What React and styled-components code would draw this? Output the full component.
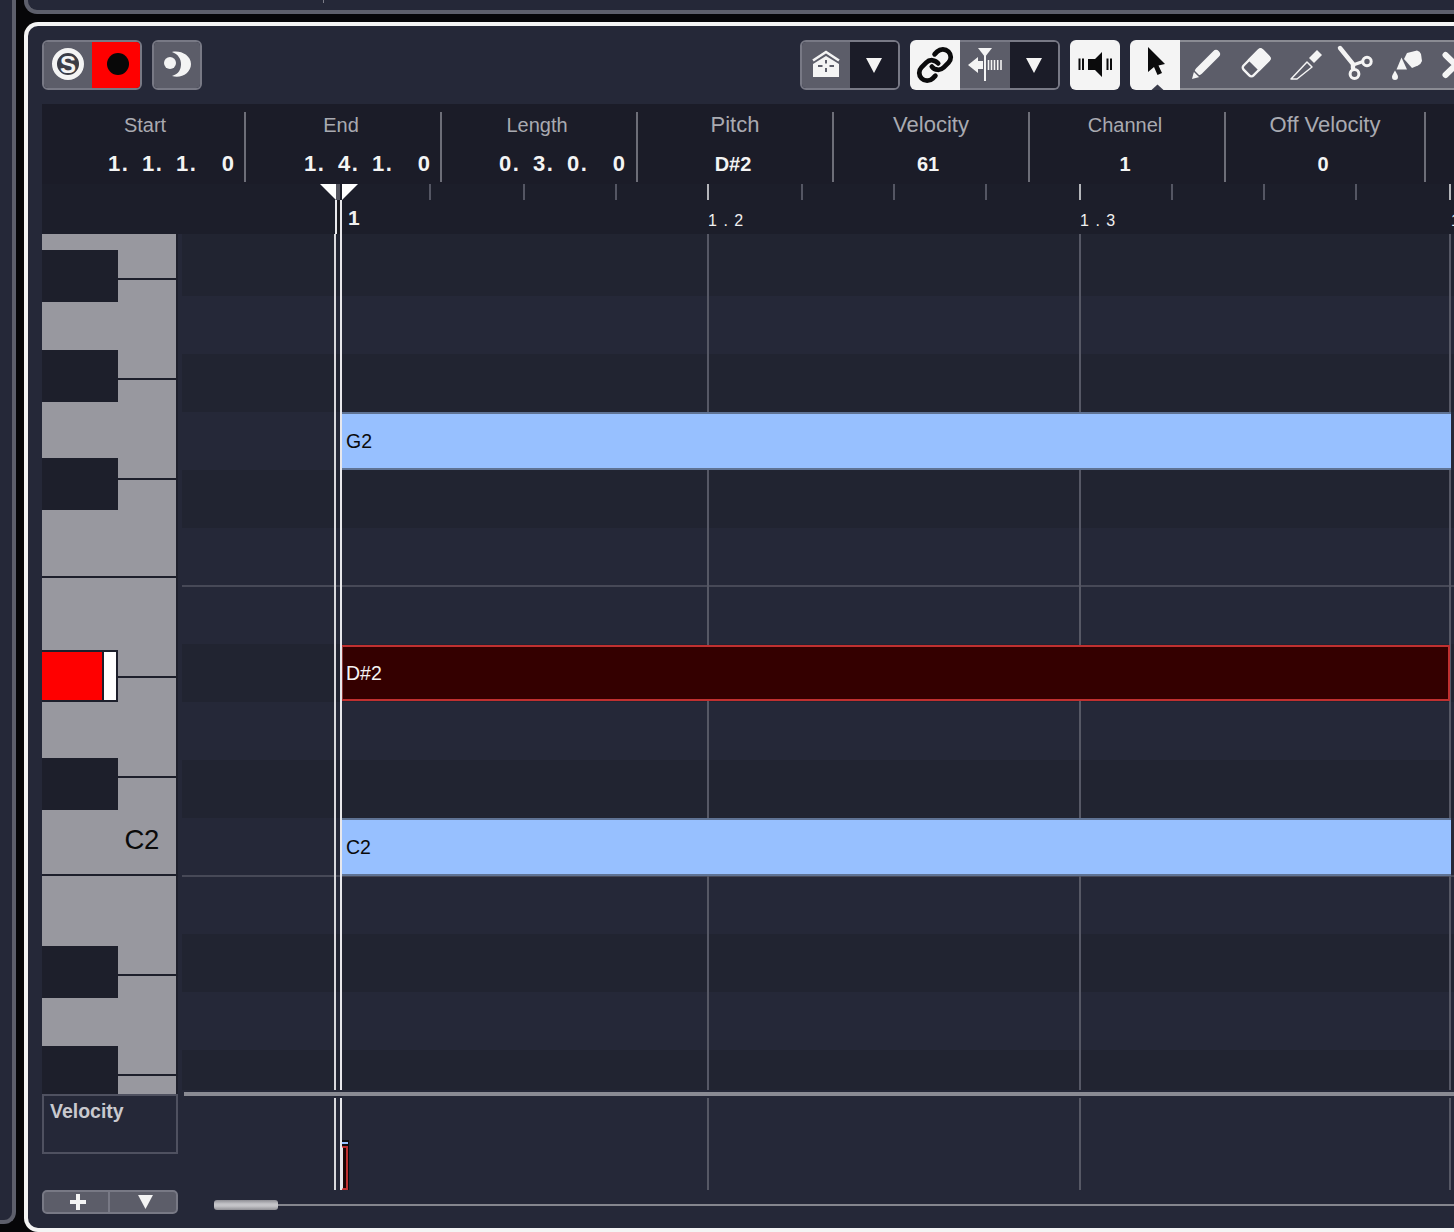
import React from "react";
import styled, { createGlobalStyle } from "styled-components";
import { Link } from "lucide-react";

const Global = createGlobalStyle`
  html, body { margin: 0; padding: 0; background: #060608; }
  body { font-family: "Liberation Sans", Arial, sans-serif; }
  * { box-sizing: border-box; }
`;

const panel = "#252838";
const dark = "#1b1c28";
const btn = "#5c5d69";
const edge = "#787985";

const Page = styled.div`
  width: 1454px; height: 1232px; display: flex; overflow: hidden; background: #060608;
`;
const LeftStrip = styled.div`
  width: 16px; height: 1224px; flex: none; background: ${panel};
  border-right: 4px solid #5d5f6b; border-bottom: 4px solid #5d5f6b; border-bottom-right-radius: 12px;
`;
const Column = styled.div`
  flex: none; width: 1438px; padding-left: 8px; display: flex; flex-direction: column; gap: 8px;
`;
const TopPanel = styled.div`
  height: 14px; flex: none; position: relative; background: ${panel};
  border-left: 4px solid #5d5f6b; border-bottom: 4px solid #5d5f6b; border-bottom-left-radius: 13px;
`;
const TopTick = styled.div`
  position: absolute; left: 295px; top: 0; width: 1px; height: 3px; background: #7c7d88;
`;
const Main = styled.div`
  position: relative; height: 1210px; flex: none; background: ${panel}; overflow: hidden;
  border: 4px solid #f4f4f4; border-right: 0; border-radius: 14px 0 0 14px;
  padding: 14px 0 0 14px; display: flex; flex-direction: column;
`;
const BottomGap = styled.div`
  position: absolute; left: 252px; bottom: -4px; width: 190px; height: 4px; background: ${panel};
`;
const Toolbar = styled.div`
  display: flex; height: 50px; flex: none; margin-bottom: 14px; width: 1500px;
`;
const Group = styled.div`
  display: flex; height: 50px; margin-left: ${p => p.$ml || 0}px; border-radius: 6px; overflow: hidden;
  border: 2px solid ${p => p.$edge || edge}; flex: none;
`;
const ToolBtn = styled.div`
  width: ${p => p.$w || 50}px; margin-left: ${p => p.$first ? -2 : 0}px; margin-right: ${p => p.$last ? -2 : 0}px;
  flex: none; height: 100%; background: ${p => p.$bg || btn};
  display: flex; align-items: center; justify-content: center;
  svg { display: block; flex: none; }
`;
const Solid = styled.div`
  width: 50px; height: 50px; flex: none; margin-left: ${p => p.$ml || 0}px; background: #f4f4f4;
  border-radius: ${p => p.$r || "6px"}; display: flex; align-items: center; justify-content: center;
  svg { display: block; flex: none; }
`;
const LinkGroup = styled.div`
  display: flex; height: 50px; margin-left: 10px; flex: none;
`;
const LinkRest = styled(Group)`
  border-left: 0; border-radius: 0 6px 6px 0;
`;
const ToolStrip = styled.div`
  display: flex; height: 50px; flex: none; margin-left: 10px;
`;
const ToolRest = styled.div`
  display: flex; height: 50px; background: ${btn}; border-top: 2px solid #8a8b93; border-bottom: 2px solid #8a8b93;
`;
const ToolCell = styled.div`
  width: 50px; height: 46px; flex: none; display: flex; align-items: center; justify-content: center;
  svg { display: block; flex: none; }
`;

const Info = styled.div`
  height: 80px; flex: none; display: flex; background: ${dark}; padding-top: 8px;
`;
const InfoCol = styled.div`
  width: ${p => p.$w}px; height: 70px; flex: none; border-right: 2px solid #6d6e78;
  display: flex; flex-direction: column; align-items: center;
  padding-right: ${p => p.$pr || 0}px; padding-left: ${p => p.$pl || 0}px;
`;
const InfoLabel = styled.div`
  font-size: ${p => p.$big ? 22 : 20}px; line-height: 24px; height: 26px; color: #a9aab1; padding-top: 1px;
`;
const InfoValue = styled.div`
  font-size: 20px; font-weight: 700; line-height: 24px; margin-top: 14px; color: #f4f4f4;
  padding-right: ${p => p.$pr || 0}px;
`;
const Segs = styled.div`
  display: flex; align-self: flex-end; margin-top: 14px; height: 24px; padding-right: ${p => p.$pr}px;
  font-size: 22px; font-weight: 700; line-height: 24px; color: #f4f4f4;
`;
const Seg = styled.span`
  width: ${p => p.$w || 34}px; text-align: ${p => p.$end ? "right" : "left"};
  letter-spacing: ${p => p.$end ? 0 : 1.5}px;
`;

const Ruler = styled.div`
  position: relative; height: 50px; flex: none; background: #1c1e2a;
`;
const Tick = styled.div`
  position: absolute; top: 0; left: ${p => p.$x - 43}px; width: 2px; height: 16px;
  background: ${p => p.$major ? "#b4b5ba" : "#545663"};
`;
const RulerText = styled.div`
  position: absolute; left: ${p => p.$x - 42}px; top: ${p => p.$big ? 22 : 25}px; color: #f0f0f0;
  font-size: ${p => p.$big ? 21 : 16}px; font-weight: ${p => p.$big ? 700 : 400};
  letter-spacing: ${p => p.$big ? 0 : 6.5}px; line-height: 24px;
`;
const PlayFlag = styled.svg`
  position: absolute; left: 278px; top: 0; display: block;
`;

const Body = styled.div`
  display: flex; flex: none; gap: 4px;
`;
const LeftCol = styled.div`
  width: 136px; flex: none; display: flex; flex-direction: column;
`;
const Piano = styled.div`
  height: 860px; width: 136px; overflow: hidden; display: flex; flex-direction: column;
  border-right: 2px solid #1d1f2b;
`;
const WhiteKey = styled.div`
  position: relative; flex: none; height: ${p => p.$h}px; background: #98989f;
  border-bottom: 2px solid #1d1f2b; display: flex; align-items: flex-end; justify-content: flex-end;
  padding: 0 17px 18px 0; color: #0a0a0a; font-size: 27.5px; line-height: 32px; letter-spacing: -0.3px;
`;
const BlackKey = styled.div`
  position: absolute; z-index: 2; left: 0; top: ${p => p.$top}px; width: 76px; height: 52px; background: #1d1f2b;
`;
const RedKey = styled(BlackKey)`
  display: flex; padding: 2px; padding-left: 0; gap: 2px;
`;
const RedPart = styled.div`
  width: 60px; height: 100%; background: #ff0000;
`;
const WhitePart = styled.div`
  flex: 1; height: 100%; background: #ffffff;
`;
const VelocityBox = styled.div`
  height: 60px; border: 2px solid #4f5160; margin-bottom: 36px; padding: 3px 6px;
  font-size: 19.5px; line-height: 24px; font-weight: 700; color: #c9c9ce;
`;
const AddBar = styled.div`
  height: 24px; display: flex; background: ${btn}; border: 2px solid ${edge}; border-radius: 5px;
`;
const AddCell = styled.div`
  flex: none; width: ${p => p.$w}px; display: flex; align-items: center; justify-content: center; padding-left: 4px;
  border-right: ${p => p.$div ? `2px solid ${edge}` : "0"};
  svg { display: block; }
`;

const RightCol = styled.div`
  width: 1272px; flex: none; overflow: hidden; display: flex; flex-direction: column;
`;
const Roll = styled.div`
  position: relative; height: 856px; flex: none; display: flex; flex-direction: column;
`;
const Row = styled.div`
  flex: none; height: ${p => p.$h || 58}px; background: ${p => p.$dark ? "#212431" : panel};
  box-shadow: ${p => p.$line ? "0 -1px 0 #474957, inset 0 1px 0 #474957" : "none"};
`;
const Note = styled.div`
  position: relative; z-index: 2; margin-left: 159px; width: 1110px; height: 58px; background: #97c0ff;
  border-top: 2px solid #5f7394; border-bottom: 2px solid #5f7394; color: #0a0a0a;
  padding-left: 5px; font-size: 19.5px; line-height: 54px;
`;
const SelectedNote = styled(Note)`
  background: #340000; color: #f4f4f4; border: 2px solid #c03030; border-left-color: #8a3a3a;
  height: 56px; width: 1109px; margin-top: 1px; line-height: 52px; padding-left: 3px;
`;
const BeatLine = styled.div`
  position: absolute; top: 0; bottom: 0; left: ${p => p.$x - 183}px; width: 2px; background: #565865; z-index: 1;
`;
const Playhead = styled.div`
  position: absolute; z-index: 3; left: ${p => p.$left}px; top: ${p => p.$top || 0}px; bottom: 0; width: 8px;
  border-left: 2px solid #d8d8dc; border-right: 2px solid #e8e8ec;
`;
const Divider = styled.div`
  height: 4px; flex: none; margin: 2px 0 2px 2px; background: #8a8b94;
`;
const Lane = styled.div`
  position: relative; height: 92px; flex: none;
`;
const VelBar = styled.div`
  position: absolute; z-index: 2; left: 159px; top: 42px; width: 8px; height: 50px; background: #0d0d10;
  display: flex; flex-direction: column; padding-top: 2px;
`;
const VelCap = styled.div`
  height: 2px; background: #97c0ff; margin-bottom: 2px; flex: none; margin-right: 1px;
`;
const VelFill = styled.div`
  flex: 1; border: 2px solid #c03030; border-left-color: #e8e8ec; margin-right: 1px; background: #1b0606;
`;
const ScrollRow = styled.div`
  height: 24px; flex: none; display: flex; align-items: center; padding: 6px 0 0 32px;
`;
const Thumb = styled.div`
  width: 64px; height: 10px; border-radius: 3px; flex: none;
  background: linear-gradient(#8e8e94, #c4c4c8 40%, #c4c4c8 60%, #8e8e94);
`;
const Track = styled.div`
  flex: 1; height: 2px; background: #85868e;
`;

const W = "#f4f4f4";
const K = "#0b0b0c";

const Tri = ({ w = 16, h = 15, fill = W }) => (
  <svg width={w} height={h} viewBox="0 0 16 15"><path d="M0 0H16L8 15Z" fill={fill} /></svg>
);

const SoloIcon = () => (
  <svg width="36" height="36" viewBox="0 0 36 36">
    <circle cx="19" cy="17" r="13.500" fill="#3c3d46" stroke={W} strokeWidth="5" />
    <text x="19" y="25.500" textAnchor="middle" fontFamily="Liberation Sans" fontWeight="700" fontSize="24" fill={W}>S</text>
  </svg>
);
const RecIcon = () => (
  <svg width="26" height="26" viewBox="0 0 26 26"><circle cx="14" cy="12" r="11" fill="#080808" /></svg>
);
const MoonIcon = () => (
  <svg width="46" height="46" viewBox="0 0 46 46">
    <circle cx="16" cy="21" r="6" fill={W} />
    <path d="M18 10C26 8 37 13 37 22C37 31 27 37 18 34C25 32 27 27 27 22C27 17 24 12 18 10Z" fill={W} />
  </svg>
);
const HouseIcon = () => (
  <svg width="46" height="46" viewBox="0 0 46 46">
    <path d="M10 18.500L23 10L36 18.500" fill="none" stroke={W} strokeWidth="2.6" />
    <path d="M23 14L36 22V35H10V22Z" fill={W} />
    <path d="M23 18V21.500M23 26V30M15 24H19.500M26.500 24H31" stroke="#5c5d69" strokeWidth="2" />
  </svg>
);
const QuantIcon = () => (
  <svg width="50" height="46" viewBox="0 0 50 46">
    <path d="M18 6H32L25 15Z" fill={W} />
    <path d="M25 9V39" stroke={W} strokeWidth="2" />
    <path d="M8 23L18 15V19H23V27H18V31Z" fill={W} />
    <path d="M28.500 18V28M31.500 18V28M34.500 18V28M37.700 18V28M41 18V28" stroke={W} strokeWidth="1.6" />
  </svg>
);
const SpeakerIcon = () => (
  <svg width="50" height="50" viewBox="0 0 50 50">
    <path d="M18 19H25L32 12V37L25 30H18Z" fill={K} />
    <path d="M9.500 18.500V30M13 18.500V30M37.500 18.500V30M41 18.500V30" stroke={K} strokeWidth="2" />
  </svg>
);
const CursorIcon = () => (
  <svg width="50" height="50" viewBox="0 0 50 50">
    <path d="M18 7L35 24L28.500 25.500L32 33L27.500 35L24 27L18 32Z" fill={K} />
    <path d="M21.500 50L27.500 44.500L33.500 50Z" fill="#3a3c4b" />
  </svg>
);
const PencilIcon = () => (
  <svg width="50" height="46" viewBox="0 0 50 46">
    <path d="M19 29L36 12" stroke={W} strokeWidth="8" strokeLinecap="round" />
    <path d="M12 37L14 29.500L19.500 35Z" fill={W} />
    <path d="M14 29L20.500 35.500" stroke={btn} strokeWidth="1.4" />
  </svg>
);
const EraserIcon = () => (
  <svg width="50" height="46" viewBox="0 0 50 46">
    <g transform="rotate(-45 26 21)">
      <rect x="12.500" y="14" width="27" height="14" rx="3" fill="none" stroke={W} strokeWidth="2.4" />
      <path d="M22.500 12.800H37.500A3 3 0 0 1 40.500 15.800V26.200A3 3 0 0 1 37.500 29.200H22.500Z" fill={W} />
    </g>
  </svg>
);
const KnifeIcon = () => (
  <svg width="50" height="46" viewBox="0 0 50 46">
    <path d="M29 16L37 8L42 13L34 21Z" fill={W} />
    <path d="M11 37L27 20L32 25L17 37Z" fill="none" stroke={W} strokeWidth="1.5" strokeLinejoin="round" />
  </svg>
);
const ScissorsIcon = () => (
  <svg width="50" height="46" viewBox="0 0 50 46">
    <path d="M10 6L23 22V26" fill="none" stroke={W} strokeWidth="4.400" strokeLinecap="round" />
    <path d="M23 23L33 19.500" stroke={W} strokeWidth="3.400" />
    <circle cx="24.500" cy="32" r="4.400" fill="none" stroke={W} strokeWidth="3" />
    <circle cx="37" cy="19.500" r="4.200" fill="none" stroke={W} strokeWidth="3" />
  </svg>
);
const PaintIcon = () => (
  <svg width="50" height="46" viewBox="0 0 50 46">
    <path d="M27 11L37 8.500Q40 9 41 12L42 19Q41 22 38 23.500L32 26L24 17Z" fill={W} />
    <path d="M21.500 15.500L27 27.500H16.500Z" fill={W} />
    <path d="M15 28.500C13 32 12 33.500 12 35A3 3 0 0 0 18 35C18 33.500 17 32 15 28.500Z" fill={W} />
  </svg>
);
const CrossIcon = () => (
  <svg width="50" height="46" viewBox="0 0 50 46">
    <path d="M15.500 13L36 33M36 13L15.500 33" stroke={W} strokeWidth="6" strokeLinecap="round" />
  </svg>
);
const PlusIcon = () => (
  <svg width="16" height="16" viewBox="0 0 16 16"><path d="M8 0V16M0 8H16" stroke={W} strokeWidth="4" /></svg>
);

const ROWS = [
  { h: 62, dark: true }, {}, { dark: true }, { note: "G2" }, { dark: true }, {},
  { line: true }, { dark: true, sel: "D#2" }, {}, { dark: true }, { note: "C2" },
  { line: true }, { dark: true }, {}, { h: 40, dark: true },
];
const MINOR = [430, 524, 616, 802, 894, 986, 1172, 1264, 1356];
const MAJOR = [708, 1080, 1450];

const Field = ({ w, label, big, value, segs, segPr, pr, pl, vpr }) => (
  <InfoCol $w={w} $pr={pr} $pl={pl}>
    <InfoLabel $big={big}>{label}</InfoLabel>
    {segs ? (
      <Segs $pr={segPr}>
        <Seg>{segs[0]}.</Seg><Seg>{segs[1]}.</Seg><Seg>{segs[2]}.</Seg><Seg $w={24} $end>{segs[3]}</Seg>
      </Segs>
    ) : <InfoValue $pr={vpr}>{value}</InfoValue>}
  </InfoCol>
);

export default function App() {
  return (
    <Page>
      <Global />
      <LeftStrip />
      <Column>
        <TopPanel><TopTick /></TopPanel>
        <Main>
          <Toolbar>
            <Group>
              <ToolBtn $w={50} $first><SoloIcon /></ToolBtn>
              <ToolBtn $bg="#ff0000" $w={50} $last><RecIcon /></ToolBtn>
            </Group>
            <Group $ml={10}><ToolBtn $w={46}><MoonIcon /></ToolBtn></Group>
            <Group $ml={598}>
              <ToolBtn $w={48}><HouseIcon /></ToolBtn>
              <ToolBtn $w={48} $bg={dark}><Tri /></ToolBtn>
            </Group>
            <LinkGroup>
              <Solid $r="6px 0 0 6px"><Link size={38} color={K} strokeWidth={3} /></Solid>
              <LinkRest>
                <ToolBtn><QuantIcon /></ToolBtn>
                <ToolBtn $w={48} $bg={dark}><Tri /></ToolBtn>
              </LinkRest>
            </LinkGroup>
            <Solid $ml={10}><SpeakerIcon /></Solid>
            <ToolStrip>
              <Solid $r="6px 0 0 6px"><CursorIcon /></Solid>
              <ToolRest>
                <ToolCell><PencilIcon /></ToolCell>
                <ToolCell><EraserIcon /></ToolCell>
                <ToolCell><KnifeIcon /></ToolCell>
                <ToolCell><ScissorsIcon /></ToolCell>
                <ToolCell><PaintIcon /></ToolCell>
                <ToolCell><CrossIcon /></ToolCell>
              </ToolRest>
            </ToolStrip>
          </Toolbar>

          <Info>
            <Field w={204} label="Start" segs={[1, 1, 1, 0]} segPr={10} pl={4} />
            <Field w={196} label="End" segs={[1, 4, 1, 0]} segPr={6} pr={4} />
            <Field w={196} label="Length" segs={[0, 3, 0, 0]} segPr={7} pr={4} />
            <Field w={196} label="Pitch" big value="D#2" vpr={4} />
            <Field w={196} label="Velocity" big value="61" vpr={6} />
            <Field w={196} label="Channel" value="1" pr={4} />
            <Field w={200} label="Off Velocity" big value="0" vpr={4} />
          </Info>

          <Ruler>
            {MINOR.map(x => <Tick key={x} $x={x} />)}
            {MAJOR.map(x => <Tick key={x} $x={x} $major />)}
            <PlayFlag width="38" height="50" viewBox="0 0 38 50">
              <path d="M0 0H16V16ZM22 0H38L22 16Z" fill="#fff" />
              <path d="M16 0H20V18H16Z" fill="#555660" />
              <path d="M15 16H17V50H15ZM20 16H22V50H20Z" fill="#e8e8ec" />
              <path d="M17 16H20V50H17Z" fill="#1a1a20" />
            </PlayFlag>
            <RulerText $x={348} $big>1</RulerText>
            <RulerText $x={708}>1.2</RulerText>
            <RulerText $x={1080}>1.3</RulerText>
            <RulerText $x={1451}>1</RulerText>
          </Ruler>

          <Body>
            <LeftCol>
              <Piano>
                <WhiteKey $h={46}><BlackKey $top={16} /></WhiteKey>
                <WhiteKey $h={100}><BlackKey $top={70} /></WhiteKey>
                <WhiteKey $h={100}><BlackKey $top={78} /></WhiteKey>
                <WhiteKey $h={98} />
                <WhiteKey $h={100}>
                  <RedKey $top={72}><RedPart /><WhitePart /></RedKey>
                </WhiteKey>
                <WhiteKey $h={100}><BlackKey $top={80} /></WhiteKey>
                <WhiteKey $h={98}>C2</WhiteKey>
                <WhiteKey $h={100}><BlackKey $top={70} /></WhiteKey>
                <WhiteKey $h={100}><BlackKey $top={70} /></WhiteKey>
                <WhiteKey $h={18} />
              </Piano>
              <VelocityBox>Velocity</VelocityBox>
              <AddBar>
                <AddCell $w={66} $div><PlusIcon /></AddCell>
                <AddCell $w={66}><Tri w={15} h={14} /></AddCell>
              </AddBar>
            </LeftCol>
            <RightCol>
              <Roll>
                {ROWS.map((r, i) => (
                  <Row key={i} $h={r.h} $dark={r.dark} $line={r.line}>
                    {r.note && <Note>{r.note}</Note>}
                    {r.sel && <SelectedNote>{r.sel}</SelectedNote>}
                  </Row>
                ))}
                {MAJOR.map(x => <BeatLine key={x} $x={x} />)}
                <Playhead $left={152} />
              </Roll>
              <Divider />
              <Lane>
                {MAJOR.map(x => <BeatLine key={x} $x={x} />)}
                <Playhead $left={152} />
                <VelBar><VelCap /><VelFill /></VelBar>
              </Lane>
              <ScrollRow><Thumb /><Track /></ScrollRow>
            </RightCol>
          </Body>
          <BottomGap />
        </Main>
      </Column>
    </Page>
  );
}
